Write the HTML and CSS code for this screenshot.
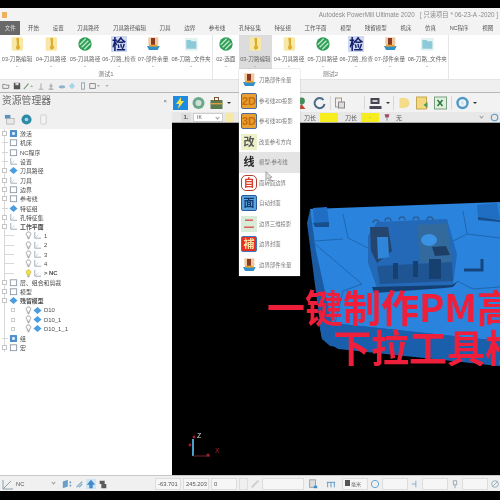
FILE: index.html
```html
<!DOCTYPE html>
<html lang="zh">
<head>
    <meta charset="UTF-8">
    <title>PowerMill</title>
    <link rel="stylesheet" href="styles.css">
</head>
<body>
<svg class="defs" width="0" height="0">
    <symbol id="folder" viewBox="0 0 24 24">
        <rect x="4" y="2" width="17" height="20" rx="2" fill="#f7e7a8"/>
        <path d="M11 3h4v10l2 5-4 3-3-3 2-5z" fill="#dcae2c"/>
    </symbol>
    <symbol id="stripe" viewBox="0 0 24 24">
        <circle cx="12" cy="12" r="10" fill="#2f9e58"/>
        <path d="M4 13 13 4M7 17 17 7M11 20 20 11" stroke="#bfe8c8" stroke-width="2"/>
    </symbol>
    <symbol id="parts" viewBox="0 0 24 24">
        <rect x="5" y="2" width="15" height="11" fill="#f0c8a0"/>
        <rect x="9" y="3" width="6" height="11" fill="#8a3a20"/>
        <path d="M3 15h19l-3 6H6z" fill="#2f8fc8"/>
        <path d="M6 13h13v3H6z" fill="#e8a030"/>
    </symbol>
    <symbol id="teal" viewBox="0 0 24 24">
        <rect x="3" y="3" width="19" height="19" fill="#e2f2f4"/>
        <path d="M5 6h6l2 2h7v11H5z" fill="#8ccad8"/>
    </symbol>
    <symbol id="tree-box" viewBox="0 0 10 10">
        <rect x="1.5" y="2" width="7" height="6.5" fill="none" stroke="#8a98a6"/>
    </symbol>
    <symbol id="tree-blue" viewBox="0 0 10 10">
        <rect x="1" y="1" width="8" height="8" rx="1" fill="#4f90cc"/>
        <rect x="3.5" y="3.5" width="3" height="3" fill="#e8f0fa"/>
    </symbol>
    <symbol id="tree-gem" viewBox="0 0 10 10">
        <path d="M5 1 9.5 5 5 9 .5 5z" fill="#4a9ee0"/>
    </symbol>
    <symbol id="tree-axes" viewBox="0 0 10 10">
        <path d="M2 1v7h7" fill="none" stroke="#9aa6b2"/>
        <path d="M2 8 6 4" stroke="#c4ced6"/>
    </symbol>
    <symbol id="tree-bulb" viewBox="0 0 10 10">
        <path d="M5 1a2.4 2.4 0 0 1 1.4 4.4V7H3.6V5.4A2.4 2.4 0 0 1 5 1z" fill="none" stroke="#999"/>
        <path d="M4 8.5h2" stroke="#888"/>
    </symbol>
    <symbol id="tree-bulb-on" viewBox="0 0 10 10">
        <path d="M5 1a2.4 2.4 0 0 1 1.4 4.4V7H3.6V5.4A2.4 2.4 0 0 1 5 1z" fill="#f2e24a" stroke="#c8b83a"/>
        <path d="M4 8.5h2" stroke="#777"/>
    </symbol>
    <symbol id="gear" viewBox="0 0 14 14">
        <circle cx="7" cy="7" r="5" fill="none" stroke="#4f9ac8" stroke-width="2.4"/>
        <circle cx="7" cy="7" r="1.8" fill="#cfe6f2"/>
    </symbol>
</svg>

<div class="app">
    <div class="top-black"></div>

    <div class="title-bar">
        <span class="app-icon"></span>
        <span class="title-text">Autodesk PowerMill Ultimate 2020 &nbsp; [ 只读项目 * 06-23-A -2020 ]</span>
    </div>

    <div class="tabs">
        <span class="tab tab-file">文件</span>
        <span class="tab">开始</span>
        <span class="tab">设置</span>
        <span class="tab">刀具路径</span>
        <span class="tab">刀具路径编辑</span>
        <span class="tab">刀具</span>
        <span class="tab">边界</span>
        <span class="tab">参考线</span>
        <span class="tab">孔特征集</span>
        <span class="tab">特征组</span>
        <span class="tab">工作平面</span>
        <span class="tab">模型</span>
        <span class="tab">残留模型</span>
        <span class="tab">机床</span>
        <span class="tab">仿真</span>
        <span class="tab">NC程序</span>
        <span class="tab">视图</span>
    </div>

    <div class="ribbon">
        <div class="group group-one">
            <div class="items">
                <div class="item"><svg class="rb-icon"><use href="#folder"/></svg><span>03-刀路编辑</span><i class="caret"></i></div>
                <div class="item"><svg class="rb-icon"><use href="#folder"/></svg><span>04-刀具路径</span><i class="caret"></i></div>
                <div class="item"><svg class="rb-icon"><use href="#stripe"/></svg><span>05-刀具路径</span><i class="caret"></i></div>
                <div class="item"><span class="check-icon">检</span><span>06-刀路_检查</span><i class="caret"></i></div>
                <div class="item"><svg class="rb-icon"><use href="#parts"/></svg><span>07-部件余量</span><i class="caret"></i></div>
                <div class="item item-wide"><svg class="rb-icon"><use href="#teal"/></svg><span>08-刀路_文件夹</span><i class="caret"></i></div>
            </div>
            <div class="group-name">测试1</div>
        </div>
        <div class="group group-two">
            <div class="items">
                <div class="item item-short"><svg class="rb-icon"><use href="#stripe"/></svg><span>02-选面</span><i class="caret"></i></div>
                <div class="item item-on"><svg class="rb-icon"><use href="#folder"/></svg><span>03-刀路编辑</span><i class="caret"></i></div>
                <div class="item"><svg class="rb-icon"><use href="#folder"/></svg><span>04-刀具路径</span><i class="caret"></i></div>
                <div class="item"><svg class="rb-icon"><use href="#stripe"/></svg><span>05-刀具路径</span><i class="caret"></i></div>
                <div class="item"><span class="check-icon">检</span><span>06-刀路_检查</span><i class="caret"></i></div>
                <div class="item"><svg class="rb-icon"><use href="#parts"/></svg><span>07-部件余量</span><i class="caret"></i></div>
                <div class="item item-wide"><svg class="rb-icon"><use href="#teal"/></svg><span>08-刀路_文件夹</span><i class="caret"></i></div>
            </div>
            <div class="group-name">测试2</div>
        </div>
    </div>

    <div class="quick">
        <svg class="qk" viewBox="0 0 10 10"><path d="M1 8V3h3l1 1h4l-1 4z" fill="none" stroke="#777"/></svg>
        <svg class="qk" viewBox="0 0 10 10"><path d="M1 1h7l1 1v7H1z" fill="#555"/><rect x="3" y="1" width="4" height="3" fill="#ddd"/></svg>
        <svg class="qk qk-wide" viewBox="0 0 14 10"><path d="M1 9 7 2" stroke="#6aa06a" stroke-width="1.4"/><path d="M11 4l2 2h-4z" fill="#999"/></svg>
        <svg class="qk" viewBox="0 0 10 10"><path d="M2 9h6M5 9V2" stroke="#b0b0b0" stroke-width="1.4"/></svg>
        <svg class="qk" viewBox="0 0 10 10"><path d="M2 9h6M5 9V2M3 5h4" stroke="#999" stroke-width="1.2"/></svg>
        <svg class="qk" viewBox="0 0 10 10"><ellipse cx="5" cy="6" rx="4" ry="2" fill="#8eb4cc"/></svg>
        <svg class="qk" viewBox="0 0 10 10"><path d="M5 1 9 5 5 9 1 5z" fill="#a8d4e8"/></svg>
        <svg class="qk" viewBox="0 0 10 10"><rect x="3" y="1" width="4" height="8" fill="#eee" stroke="#8aa0b0"/></svg>
        <svg class="qk qk-wide" viewBox="0 0 14 10"><rect x="1" y="2" width="7" height="6" fill="none" stroke="#777"/><path d="M10 4l2 2 2-2z" fill="#999"/></svg>
        <svg class="qk" viewBox="0 0 10 10"><path d="M3 4l2 2 2-2z" fill="#999"/></svg>
    </div>

    <div class="main">
        <aside class="side">
            <div class="side-head">
                <div class="side-title"><span>资源管理器</span><span class="side-close">×</span></div>
                <div class="side-tabs">
                    <svg class="side-icon" viewBox="0 0 12 12"><rect x="1" y="1" width="6" height="4" fill="#5a92c0"/><rect x="3" y="5" width="8" height="6" fill="#e8e8e8" stroke="#999" stroke-width=".6"/></svg>
                    <svg class="side-icon" viewBox="0 0 12 12"><circle cx="6" cy="6" r="5.5" fill="#2f8aa8"/><circle cx="6" cy="6" r="2" fill="#a8d8e8"/></svg>
                    <svg class="side-icon" viewBox="0 0 12 12"><rect x="3" y="1" width="6" height="10" rx="1" fill="#f4f4f4" stroke="#ccc"/></svg>
                </div>
            </div>
            <ul class="tree">
                <li class="row"><i class="exp"></i><svg class="ti"><use href="#tree-blue"/></svg><span>激活</span></li>
                <li class="row"><i class="dash"></i><svg class="ti"><use href="#tree-box"/></svg><span>机床</span></li>
                <li class="row"><i class="dash"></i><svg class="ti"><use href="#tree-box"/></svg><span>NC程序</span></li>
                <li class="row"><i class="dash"></i><svg class="ti"><use href="#tree-axes"/></svg><span>设置</span></li>
                <li class="row"><i class="exp"></i><svg class="ti"><use href="#tree-gem"/></svg><span>刀具路径</span></li>
                <li class="row"><i class="exp"></i><svg class="ti"><use href="#tree-axes"/></svg><span>刀具</span></li>
                <li class="row"><i class="exp"></i><svg class="ti"><use href="#tree-box"/></svg><span>边界</span></li>
                <li class="row"><i class="exp"></i><svg class="ti"><use href="#tree-box"/></svg><span>参考线</span></li>
                <li class="row"><i class="dash"></i><svg class="ti"><use href="#tree-gem"/></svg><span>特征组</span></li>
                <li class="row"><i class="exp"></i><svg class="ti"><use href="#tree-axes"/></svg><span>孔特征集</span></li>
                <li class="row row-bold"><i class="exp"></i><svg class="ti"><use href="#tree-axes"/></svg><span>工作平面</span></li>
                <li class="row sub"><i class="dash-long"></i><svg class="ti"><use href="#tree-bulb"/></svg><svg class="ti"><use href="#tree-axes"/></svg><span>1</span></li>
                <li class="row sub"><i class="dash-long"></i><svg class="ti"><use href="#tree-bulb"/></svg><svg class="ti"><use href="#tree-axes"/></svg><span>2</span></li>
                <li class="row sub"><i class="dash-long"></i><svg class="ti"><use href="#tree-bulb"/></svg><svg class="ti"><use href="#tree-axes"/></svg><span>3</span></li>
                <li class="row sub"><i class="dash-long"></i><svg class="ti"><use href="#tree-bulb"/></svg><svg class="ti"><use href="#tree-axes"/></svg><span>4</span></li>
                <li class="row sub row-bold"><i class="dash-long"></i><svg class="ti"><use href="#tree-bulb-on"/></svg><svg class="ti"><use href="#tree-axes"/></svg><span>&gt; NC</span></li>
                <li class="row"><i class="exp"></i><svg class="ti"><use href="#tree-box"/></svg><span>层、组合和剪裁</span></li>
                <li class="row"><i class="exp"></i><svg class="ti"><use href="#tree-box"/></svg><span>模型</span></li>
                <li class="row row-bold"><i class="exp"></i><svg class="ti"><use href="#tree-gem"/></svg><span>残留模型</span></li>
                <li class="row sub"><i class="exp-in"></i><svg class="ti"><use href="#tree-bulb"/></svg><svg class="ti"><use href="#tree-gem"/></svg><span>D10</span></li>
                <li class="row sub"><i class="exp-in"></i><svg class="ti"><use href="#tree-bulb"/></svg><svg class="ti"><use href="#tree-gem"/></svg><span>D10_1</span></li>
                <li class="row sub"><i class="exp-in"></i><svg class="ti"><use href="#tree-bulb"/></svg><svg class="ti"><use href="#tree-gem"/></svg><span>D10_1_1</span></li>
                <li class="row"><i class="dash"></i><svg class="ti"><use href="#tree-blue"/></svg><span>组</span></li>
                <li class="row"><i class="exp"></i><svg class="ti"><use href="#tree-box"/></svg><span>宏</span></li>
            </ul>
        </aside>

        <section class="work">
            <div class="tools">
                <div class="tool-row">
                    <span class="bolt"><svg viewBox="0 0 14 14"><path d="M8 1 3 8h3l-1 5 6-8H8z" fill="#f4e24a"/></svg></span>
                    <svg class="big" viewBox="0 0 14 14"><circle cx="7" cy="7" r="6" fill="#6aa88a"/><circle cx="7" cy="7" r="3" fill="#d0e0d8"/></svg>
                    <svg class="big" viewBox="0 0 14 14"><rect x="1" y="4" width="12" height="9" fill="#5a7a50"/><rect x="5" y="1.5" width="4" height="3" fill="none" stroke="#775533"/><rect x="1" y="7" width="12" height="1.4" fill="#d8a040"/></svg>
                    <i class="drop"></i>
                    <i class="sep sep-menu"></i>
                    <svg class="big" viewBox="0 0 14 14"><circle cx="7" cy="5" r="3.4" fill="#3f8f5a"/><path d="M3 13l4-5 4 5z" fill="#c04838"/></svg>
                    <svg class="big" viewBox="0 0 14 14"><path d="M11 4a5 5 0 1 0 1 4" fill="none" stroke="#4a6a8a" stroke-width="2"/></svg>
                    <i class="sep"></i>
                    <svg class="big big-doc" viewBox="0 0 14 14"><rect x="3" y="2" width="6" height="9" fill="#eee" stroke="#a89a80"/><rect x="6" y="6" width="6" height="6" fill="#ddd" stroke="#888"/></svg>
                    <i class="sep"></i>
                    <svg class="big" viewBox="0 0 14 14"><path d="M2 2h9v6H2zM1 10h12v3H1z" fill="#445"/><path d="M4 4h5v2H4z" fill="#ccc"/></svg>
                    <i class="drop"></i>
                    <i class="sep"></i>
                    <svg class="big" viewBox="0 0 14 14"><path d="M2 2h5a5 5 0 0 1 0 10H2z" fill="#f4dc8a"/></svg>
                    <svg class="big" viewBox="0 0 14 14"><rect x="1" y="1" width="10" height="12" fill="#f4d880" stroke="#c8a850"/><path d="M8 9l4-3v6z" fill="#4a9a5a"/></svg>
                    <svg class="big" viewBox="0 0 14 14"><rect x="1" y="1" width="12" height="12" fill="#dff0e0" stroke="#7aa080"/><path d="M4 4l5 6M9 4l-5 6" stroke="#2a7a40" stroke-width="1.6"/></svg>
                    <i class="sep"></i>
                    <svg class="big"><use href="#gear"/></svg>
                    <i class="drop"></i>
                </div>
                <div class="tool-row tool-row-small">
                    <span class="mini-box">1.</span>
                    <span class="combo">IK<i class="combo-arrow"></i></span>
                    <span class="flag flag-narrow"></span>
                    <span class="tool-gap"></span>
                    <span class="label">刀长</span>
                    <span class="flag flag-one"></span>
                    <span class="label">刀长</span>
                    <span class="flag flag-two">·</span>
                    <svg class="pin" viewBox="0 0 10 10"><path d="M2 1h6L7 5H3z" fill="#a04868"/><path d="M5 5v4" stroke="#777"/></svg>
                    <span class="label">无</span>
                    <span class="field"><i class="combo-arrow"></i></span>
                    <svg class="ring" viewBox="0 0 10 10"><circle cx="5" cy="5" r="3.6" fill="none" stroke="#5a9ac8" stroke-width="1.3"/></svg>
                </div>
            </div>

            <div class="view">
                <svg class="model" viewBox="172 122 328 353">
                    <path d="M310 209 307 222 322 338 330 345 500 365V340L340 300Z" fill="#1b5ba4"/>
                    <path d="M310 208 500 201V340L332 322 316 250Z" fill="#2a83dc"/>
                    <path d="M332 322 500 340V365L338 348 322 338 318 318Z" fill="#1a5fab"/>
                    <path d="M313 207 327 206 329 222 314 224Z" fill="#1f6ec4"/>
                    <path d="M313 222 329 221 329 226 315 226Z" fill="#174e8c"/>
                    <path d="M477 204 497 202 500 218 478 217Z" fill="#1f6ec4"/>
                    <path d="M478 216 500 219V221L478 219Z" fill="#174e8c"/>
                    <g fill="none" stroke="#1c5fa4" stroke-width=".8">
                        <path d="M343 213 348 237 368 247"/>
                        <path d="M315 240 343 238"/>
                        <path d="M362 283 315 243"/>
                        <path d="M362 283 343 290 335 322"/>
                        <path d="M463 210 467 233 453 240"/>
                        <path d="M467 233 500 237"/>
                        <path d="M457 280 473 288 500 286"/>
                    </g>
                    <path d="M368 235 377 221 447 218 457 253 453 284 377 287 368 262Z" fill="#2369b8"/>
                    <path d="M374 292 372 286 452 284 458 280 453 286 445 287Z" fill="#143f72"/>
                    <path d="M370 226 388 226 392 250 377 262 371 250Z" fill="#24466e"/>
                    <path d="M377 236 388 236 389 256 378 258Z" fill="#2f86d8"/>
                    <path d="M417 224 447 222 452 262 420 262Z" fill="#326a9e"/>
                    <ellipse cx="429" cy="239" rx="8" ry="6" fill="#3a93e4"/>
                    <path d="M432 246 446 245 450 254 435 255Z" fill="#1d3f66"/>
                    <path d="M377 265 452 261 453 280 380 283Z" fill="#1f5593"/>
                    <g fill="#16406f">
                        <rect x="393" y="262" width="5" height="16"/>
                        <rect x="413" y="260" width="5" height="16"/>
                        <rect x="429" y="258" width="12" height="20"/>
                    </g>
                    <g fill="none" stroke="#2b5f98" stroke-width="1.4">
                        <path d="M373 222a3 3 0 0 1 6 0"/>
                        <path d="M385 220a3 3 0 0 1 6 0"/>
                        <path d="M399 219a3 3 0 0 1 6 0"/>
                        <path d="M413 219a3 3 0 0 1 6 0"/>
                        <path d="M427 219a3 3 0 0 1 6 0"/>
                    </g>
                    <path d="M464 269H482V258" fill="none" stroke="#15467e" stroke-width="3"/>
                    <g class="axis">
                        <path d="M193 438V455" stroke="#4aa0c8" stroke-width="2"/>
                        <path d="M193 455H210" stroke="#7a2030" stroke-width="1"/>
                        <circle cx="194" cy="436" r="1.4" fill="#a02030"/>
                        <circle cx="190" cy="444" r="1.4" fill="#a02030"/>
                        <circle cx="208" cy="454" r="1.6" fill="#a02030"/>
                        <text x="197" y="437" fill="#d8e0e8" font-size="7">Z</text>
                        <text x="215" y="452" fill="#a02030" font-size="7">X</text>
                    </g>
                </svg>
                <div class="slogan">
                    <div class="slogan-one">一键制作PM高</div>
                    <div class="slogan-two">下拉工具栏</div>
                </div>
            </div>
        </section>
    </div>

    <div class="status">
        <svg class="st-icon st-axes" viewBox="0 0 12 12"><path d="M1 11V2M1 11h10M1 11l8-8" stroke="#8aa0a8" fill="none"/></svg>
        <span class="st-combo">NC<i class="combo-arrow"></i></span>
        <svg class="st-icon" viewBox="0 0 12 12"><path d="M1 3l6-2v8l-6 2zM9 3h2v2H9zM9 7h2v2H9z" fill="#6a9ec8"/></svg>
        <svg class="st-icon" viewBox="0 0 12 12"><path d="M3 10 10 3M6 10l4-4" stroke="#8ab4d0" stroke-width="1.6"/></svg>
        <svg class="st-icon st-active" viewBox="0 0 12 12"><path d="M6 1 11 7H1zM4 7h4v4H4z" fill="#3f8ac8"/></svg>
        <svg class="st-icon" viewBox="0 0 12 12"><path d="M2 2h6v4H2zM4 6h6v5H4z" fill="#5a5a5a"/></svg>
        <span class="st-blank"></span>
        <span class="st-input">-63.701</span>
        <span class="st-input">245.203</span>
        <span class="st-input">0</span>
        <span class="st-stub"></span>
        <svg class="st-icon" viewBox="0 0 12 12"><path d="M2 10 10 2" stroke="#ccc" stroke-width="2"/></svg>
        <span class="st-input st-long"></span>
        <svg class="st-icon st-near" viewBox="0 0 12 12"><rect x="2" y="1" width="7" height="9" fill="#ddd" stroke="#8a98a6"/><rect x="7" y="8" width="4" height="3" fill="#3f8ac8"/></svg>
        <svg class="st-icon st-gap" viewBox="0 0 12 12"><path d="M1 4h10M2 4v6M6 4v6M10 4v6" stroke="#4a8ac0"/></svg>
        <span class="st-input st-unit"><i class="unit-icon"></i>毫米</span>
        <svg class="st-icon" viewBox="0 0 12 12"><circle cx="6" cy="6" r="4.4" fill="none" stroke="#6aa8d8" stroke-width="1.2"/></svg>
        <span class="st-input"></span>
        <svg class="st-icon" viewBox="0 0 12 12"><path d="M2 6h5M7 2v8" stroke="#8ab0d0" stroke-width="1.2"/></svg>
        <span class="st-input"></span>
        <svg class="st-icon" viewBox="0 0 12 12"><path d="M4 2h4v5H4zM6 7v4" fill="none" stroke="#8aa0a8"/></svg>
        <span class="st-input"></span>
        <svg class="st-icon" viewBox="0 0 12 12"><circle cx="6" cy="6" r="4" fill="none" stroke="#8aa8b8"/><path d="M3 9l6-6" stroke="#8aa8b8"/></svg>
    </div>
    <div class="bottom-black"></div>

    <div class="menu">
        <div class="menu-item"><svg class="menu-svg"><use href="#parts"/></svg><span>刀路部件余量</span></div>
        <div class="menu-item"><b class="mi mi-orange">2D</b><span>参考线2D投影</span></div>
        <div class="menu-item"><b class="mi mi-orange">3D</b><span>参考线3D投影</span></div>
        <div class="menu-item"><b class="mi mi-pale">改</b><span>改变参考方向</span></div>
        <div class="menu-item menu-item-on"><b class="mi mi-line">线</b><span>模型-参考线</span></div>
        <div class="menu-item"><b class="mi mi-red">自</b><span>面转面边界</span></div>
        <div class="menu-item"><b class="mi mi-blue">面</b><span>自动封面</span></div>
        <div class="menu-item"><b class="mi mi-green">二</b><span>边界三维投影</span></div>
        <div class="menu-item"><b class="mi mi-tile">補</b><span>边界封面</span></div>
        <div class="menu-item"><svg class="menu-svg"><use href="#parts"/></svg><span>边界部件余量</span></div>
        <svg class="cursor" viewBox="0 0 10 14"><path d="M1 1v10l3-2 2 4 2-1-2-4h3z" fill="#ddd" stroke="#777" stroke-width=".7"/></svg>
    </div>
</div>
</body>
</html>
```

FILE: styles.css
```css
* {
    box-sizing: border-box;
}
html, body {
    margin: 0;
    height: 100%;
    background: #000;
    overflow: hidden;
}
.defs {
    position: absolute;
}
.app {
    position: relative;
    width: 500px;
    height: 500px;
    display: flex;
    flex-direction: column;
    background: #000;
    color: #444;
    font-family: "Liberation Sans", "Noto Sans CJK SC", sans-serif;
    font-size: 6.5px;
    overflow: hidden;
    filter: blur(0.45px);
}
.top-black {
    height: 8px;
    flex: none;
}
.bottom-black {
    height: 9px;
    flex: none;
}

.title-bar {
    height: 13px;
    flex: none;
    background: #f3f3f3;
    display: flex;
    align-items: center;
    justify-content: space-between;
    padding: 0 2px 0 2px;
}
.app-icon {
    width: 5px;
    height: 6px;
    background: #eeb060;
}
.title-text {
    color: #8a8a8a;
    font-size: 6.3px;
    white-space: nowrap;
}

.tabs {
    height: 14px;
    flex: none;
    background: #f3f3f3;
    display: flex;
    align-items: center;
    white-space: nowrap;
    color: #555;
    font-size: 5.5px;
}
.tab {
    padding: 0 6.8px;
}
.tab-file {
    width: 22px;
    height: 14px;
    padding: 0;
    margin-right: 1px;
    background: #686868;
    color: #ddd;
    display: flex;
    align-items: center;
    justify-content: center;
}

.ribbon {
    height: 45px;
    flex: none;
    background: #fff;
    display: flex;
    border-bottom: 1px solid #e4e4e4;
}
.group {
    display: flex;
    flex-direction: column;
    border-right: 1px solid #e6e6e6;
}
.group-one {
    width: 213px;
}
.group-two {
    width: 236px;
}
.items {
    display: flex;
    height: 34px;
}
.item {
    width: 34px;
    display: flex;
    flex-direction: column;
    align-items: center;
    padding-top: 1px;
    font-size: 5.6px;
    color: #666;
    white-space: nowrap;
}
.item-wide {
    width: 42px;
}
.item-short {
    width: 26px;
}
.item-on {
    background: #dcdcdc;
}
.rb-icon {
    width: 16px;
    height: 16px;
    flex: none;
    margin-bottom: 3px;
}
.check-icon {
    width: 16px;
    height: 16px;
    margin-bottom: 3px;
    background: #cfd8ee;
    color: #14206e;
    font-size: 14px;
    font-weight: bold;
    line-height: 16px;
    text-align: center;
}
.caret {
    width: 0;
    height: 0;
    margin-top: 3px;
    border: 1.5px solid transparent;
    border-top-color: #999;
}
.group-name {
    text-align: center;
    color: #777;
    font-size: 6px;
    line-height: 10px;
}

.quick {
    height: 13px;
    flex: none;
    background: #efefef;
    border-bottom: 1px solid #b8b8b8;
    display: flex;
    align-items: center;
    padding-left: 2px;
    gap: 2.5px;
}
.qk {
    width: 8px;
    height: 8px;
}
.qk-wide {
    width: 11px;
}

.main {
    flex: 1;
    display: flex;
    min-height: 0;
}
.side {
    width: 172px;
    flex: none;
    display: flex;
    flex-direction: column;
    background: #fff;
}
.side-head {
    height: 36px;
    flex: none;
    background: #f0f0f0;
}
.side-title {
    height: 21px;
    display: flex;
    align-items: flex-start;
    justify-content: space-between;
    padding: 3px 5px 0 2px;
    color: #6a6a6a;
    font-size: 9.8px;
    line-height: 10px;
}
.side-close {
    font-size: 6px;
}
.side-tabs {
    display: flex;
    gap: 6px;
    padding-left: 4px;
}
.side-icon {
    width: 11px;
    height: 11px;
}
.tree {
    list-style: none;
    margin: 0;
    padding: 0;
    background: linear-gradient(#d8d8d8, #d8d8d8) 4px 0 / 1px 223px no-repeat;
}
.row {
    height: 9.3px;
    display: flex;
    align-items: center;
    color: #4a4a4a;
    font-size: 5.9px;
    white-space: nowrap;
}
.row-bold {
    font-weight: bold;
}
.exp {
    width: 5px;
    height: 5px;
    margin: 0 1px 0 2px;
    flex: none;
    background: #fff;
    border: 1px solid #c4c4c4;
}
.dash {
    width: 6px;
    height: 1px;
    margin: 0 0 0 2px;
    flex: none;
    background: #d4d4d4;
}
.dash-long {
    width: 10px;
    height: 1px;
    margin: 0 10px 0 4px;
    flex: none;
    background: #d8d8d8;
}
.exp-in {
    width: 4px;
    height: 4px;
    margin: 0 9px 0 11px;
    flex: none;
    border: 1px solid #ccc;
}
.ti {
    width: 9px;
    height: 9px;
    flex: none;
    margin: 0 2px 0 1px;
}
.sub .ti {
    margin: 0;
}
.sub span {
    margin-left: 2px;
}

.work {
    flex: 1;
    min-width: 0;
    display: flex;
    flex-direction: column;
}
.tools {
    height: 30px;
    flex: none;
    background: #f2f2f2;
}
.tool-row {
    height: 19px;
    display: flex;
    align-items: center;
    padding-left: 1px;
    gap: 3px;
}
.bolt {
    width: 15px;
    height: 14px;
    background: #1e8ae0;
    display: flex;
}
.big {
    width: 15px;
    height: 14px;
    flex: none;
}
.big-doc {
    margin: 0 14px 0 -2px;
}
.drop {
    width: 0;
    height: 0;
    border: 2px solid transparent;
    border-top-color: #333;
    margin-top: 2px;
}
.sep {
    width: 1px;
    height: 14px;
    background: #d8d8d8;
}
.sep-menu {
    margin: 0 50px 0 6px;
}
.tool-row-small {
    height: 11px;
    background: #e8e8e8;
    padding-left: 9px;
    gap: 2px;
    font-size: 6px;
    color: #555;
    border-bottom: 1px solid #aaa;
}
.label {
    flex: none;
    white-space: nowrap;
}
.mini-box {
    width: 10px;
    height: 9px;
    background: #ddd;
    text-align: center;
    line-height: 9px;
    font-weight: bold;
}
.combo {
    width: 30px;
    height: 9px;
    padding-left: 3px;
    background: #fff;
    border: 1px solid #ccc;
    font-size: 5px;
    line-height: 7px;
    position: relative;
}
.combo-arrow {
    position: absolute;
    right: 3px;
    top: 2px;
    width: 3px;
    height: 3px;
    border-right: 1px solid #999;
    border-bottom: 1px solid #999;
    transform: rotate(45deg);
}
.flag {
    height: 9px;
    background: #f7ec1e;
    text-align: center;
    line-height: 8px;
    flex: none;
}
.flag-narrow {
    width: 9px;
    background: #f5e9a8;
}
.tool-gap {
    width: 66px;
    flex: none;
}
.flag-one {
    width: 18px;
    margin: 0 5px 0 2px;
}
.flag-two {
    width: 18px;
    margin: 0 2px;
}
.pin {
    width: 8px;
    height: 9px;
    margin-right: 3px;
    flex: none;
}
.field {
    width: 82px;
    height: 9px;
    position: relative;
    flex: none;
}
.ring {
    width: 9px;
    height: 9px;
    margin-left: 2px;
    flex: none;
}

.view {
    flex: 1;
    position: relative;
    background: #000;
    min-height: 0;
    overflow: hidden;
}
.model {
    position: absolute;
    left: 0;
    top: 0;
    width: 328px;
    height: 353px;
}
.axis text {
    font-family: "Liberation Sans", sans-serif;
}
.slogan {
    position: absolute;
    left: 95px;
    top: 163px;
    width: 233px;
    overflow: hidden;
    color: #ef1f3c;
    font-family: "Noto Sans CJK SC", sans-serif;
    font-weight: bold;
    font-size: 38px;
    line-height: 40px;
    white-space: nowrap;
}
.slogan-two {
    margin-left: 66px;
}

.status {
    height: 16px;
    flex: none;
    background: #f0f0f0;
    border-top: 1px solid #c8c8c8;
    display: flex;
    align-items: center;
    padding-left: 2px;
    gap: 2px;
    font-size: 5.8px;
    color: #555;
}
.st-icon {
    width: 10px;
    height: 10px;
    flex: none;
}
.st-axes {
    width: 12px;
    height: 12px;
}
.st-active {
    background: #cfe4f4;
}
.st-near {
    margin-left: 2px;
}
.st-gap {
    margin-left: 6px;
}
.st-combo {
    width: 42px;
    position: relative;
    height: 10px;
    line-height: 10px;
    margin-right: 2px;
}
.st-blank {
    width: 43px;
}
.st-input {
    width: 26px;
    height: 12px;
    line-height: 10px;
    padding-left: 2px;
    background: #f6f6f6;
    border: 1px solid #ddd;
    flex: none;
}
.st-stub {
    width: 9px;
    height: 12px;
    border: 1px solid #ddd;
}
.st-long {
    width: 42px;
}
.st-unit {
    width: 26px;
    margin-left: 4px;
    font-size: 5px;
    color: #666;
}
.unit-icon {
    display: inline-block;
    width: 5px;
    height: 6px;
    margin-right: 1px;
    background: #555;
}

.menu {
    position: absolute;
    left: 239px;
    top: 69px;
    width: 61px;
    height: 207px;
    padding-top: 1px;
    background: #fff;
    box-shadow: 0 0 1px #999;
}
.menu-item {
    height: 20.5px;
    display: flex;
    align-items: center;
    gap: 2px;
    padding-left: 2px;
    font-size: 5.4px;
    color: #777;
    white-space: nowrap;
}
.menu-item-on {
    background: #e4e4e4;
}
.menu-svg {
    width: 16px;
    height: 16px;
    flex: none;
}
.mi {
    width: 16px;
    height: 16px;
    flex: none;
    text-align: center;
    font-size: 11px;
    line-height: 16px;
}
.mi-orange {
    background: #e8a030;
    color: #c86a10;
    border: 1px solid #4a6a98;
    border-radius: 2px;
    line-height: 14px;
}
.mi-pale {
    background: #eef0c8;
    color: #555;
}
.mi-line {
    color: #222;
}
.mi-red {
    border: 1px solid #b04030;
    border-radius: 5px;
    color: #e04030;
    line-height: 14px;
}
.mi-blue {
    background: #5aa4e0;
    color: #123a70;
    border: 1px solid #2a5a98;
    border-radius: 2px;
    line-height: 14px;
}
.mi-green {
    background: #d8ecd8;
    color: #d86060;
}
.mi-tile {
    background: #e83020;
    color: #f8e0a0;
    border: 1px solid #3a7ac0;
    border-radius: 2px;
    line-height: 14px;
}
.cursor {
    position: absolute;
    left: 26px;
    top: 102px;
    width: 8px;
    height: 11px;
}
```
